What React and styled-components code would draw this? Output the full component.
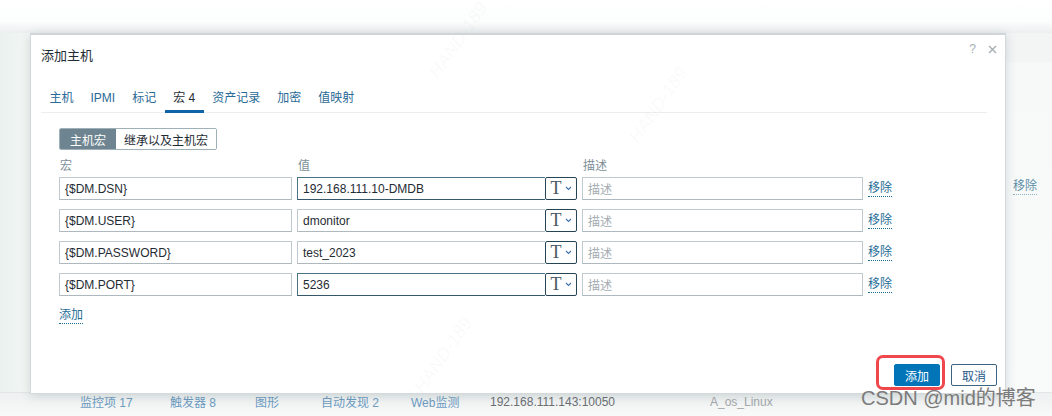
import React from "react";
import styled, { createGlobalStyle, css } from "styled-components";

const Global = createGlobalStyle`
  * { box-sizing: border-box; }
  body { margin: 0; font-family: "Liberation Sans", "Noto Sans CJK SC", sans-serif; font-size: 12px; color: #1f2c33; }
`;

const Page = styled.div`
  position: relative;
  width: 1052px;
  height: 416px;
  overflow: hidden;
  background: #ffffff;
`;

const Backdrop = styled.div`
  display: flex;
  flex-direction: column;
  height: 100%;
`;

const BackTop = styled.div`
  height: 33px;
  background: linear-gradient(#ffffff 0%, #fcfdfd 65%, #eceff0 100%);
`;

const BackMiddle = styled.div`
  flex: 1;
  display: flex;
`;

const LeftGutter = styled.div`
  width: 30px;
  background: linear-gradient(90deg, #eaf1ee, #f3f7f5);
  border-bottom: 1px solid #e2e6e6;
`;

const CenterFill = styled.div`
  flex: 1;
  background: #fafbfb;
`;

const RightGutter = styled.div`
  width: 46px;
  padding: 146px 0 0 7px;
  background: linear-gradient(#f3f5f5 0, #f3f5f5 28px, #f7f9f9 30px, #f9fbfb 100%);
  border-bottom: 1px solid #e2e6e6;
`;

const GhostLink = styled.span`
  display: inline-block;
  color: #5d8ea6;
  border-bottom: 1px dotted #8fb0c0;
  line-height: 15px;
  font-size: 12px;
`;

const BackBottom = styled.div`
  height: 23px;
  display: flex;
  align-items: center;
  padding: 0 0 6px 80px;
  background: linear-gradient(#eef1f1, #f8f9f9);
  font-size: 12px;
`;

const BackTab = styled.span`
  width: ${(p) => p.$w}px;
  flex: none;
  color: ${(p) => p.$color || "#6d9cc2"};
  white-space: nowrap;
`;

const Dialog = styled.div`
  position: absolute;
  left: 30px;
  top: 33px;
  width: 976px;
  height: 361px;
  background: #ffffff;
  border: 1px solid #d3d9dc;
  border-top: 2px solid #cfd5d8;
  box-shadow: 0 2px 10px rgba(40, 60, 60, 0.18);
  display: flex;
  flex-direction: column;
`;

const Header = styled.div`
  display: flex;
  justify-content: space-between;
  align-items: flex-start;
  height: 43px;
  padding: 11px 8px 0 10px;
`;

const Title = styled.h4`
  margin: 0;
  font-size: 13px;
  font-weight: normal;
  line-height: 20px;
  color: #1f2c33;
`;

const HeaderIcons = styled.div`
  display: flex;
  gap: 12px;
  align-items: center;
  margin-top: -4px;
  color: #a6aeb2;
  font-size: 12px;
`;

const Body = styled.div`
  flex: 1;
  padding: 0 18px 0 10px;
`;

const TabList = styled.ul`
  display: flex;
  margin: 0;
  padding: 0;
  list-style: none;
  border-bottom: 1px solid #ebeef0;
`;

const Tab = styled.li`
  padding: 12px 8.5px 4px;
  line-height: 16px;
  font-size: 12px;
  color: #2a6a96;
  border-bottom: 3px solid transparent;
  margin-bottom: -1px;
  white-space: nowrap;
  ${(p) =>
    p.$active &&
    css`
      color: #1f2c33;
      border-bottom-color: #0f64a8;
    `}
`;

const Panel = styled.div`
  padding: 15px 0 0 18px;
`;

const Segmented = styled.div`
  display: inline-flex;
  height: 22px;
  border: 1px solid #9fb0b8;
  border-radius: 2px;
  overflow: hidden;
`;

const Segment = styled.span`
  display: flex;
  align-items: center;
  padding: 0 ${(p) => (p.$active ? 10 : 8)}px;
  font-size: 12px;
  background: ${(p) => (p.$active ? "#6e8591" : "#ffffff")};
  color: ${(p) => (p.$active ? "#ffffff" : "#1f2c33")};
`;

const Grid = styled.div`
  display: grid;
  grid-template-columns: 233px 280px 281px auto;
  column-gap: 5px;
  row-gap: 9px;
  margin-top: 9px;
  align-items: center;
`;

const ColLabel = styled.div`
  font-size: 12px;
  line-height: 14px;
  color: #7d8e96;
  padding-left: 1px;
  margin-bottom: -5px;
`;

const TextInput = styled.div`
  height: 23px;
  display: flex;
  align-items: center;
  padding: 0 5px;
  border: 1px solid ${(p) => (p.$dark ? "#4c7485" : "#bfc9ce")};
  border-bottom-color: ${(p) => (p.$dark ? "#34586a" : "#aeb9bf")};
  background: #ffffff;
  font-size: 12px;
  color: ${(p) => (p.$placeholder ? "#a3abaf" : "#1f2c33")};
  white-space: nowrap;
  overflow: hidden;
`;

const ValueGroup = styled.div`
  display: flex;
  height: 23px;
`;

const ValueField = styled(TextInput)`
  flex: 1;
  border-right: none;
`;

const TypeButton = styled.div`
  width: 32px;
  height: 23px;
  flex: none;
  display: flex;
  align-items: center;
  justify-content: center;
  gap: 3px;
  border: 1px solid #254455;
  border-radius: 2px;
  background: #ffffff;
  font-family: "Liberation Serif", "DejaVu Serif", serif;
  font-size: 18px;
  color: #4a575e;
`;

const LinkText = styled.span`
  display: inline-block;
  justify-self: start;
  font-size: 12px;
  line-height: 15px;
  color: #1f6d96;
  border-bottom: 1px dotted #1f6d96;
`;

const AddRow = styled.div`
  margin-top: 12px;
`;

const Footer = styled.div`
  display: flex;
  justify-content: flex-end;
  gap: 11px;
  padding: 0 8px 7px 0;
`;

const ButtonWrap = styled.div`
  position: relative;
`;

const Highlight = styled.div`
  position: absolute;
  left: -18px;
  right: -5px;
  top: -9px;
  bottom: -4px;
  border: 3px solid #f0474c;
  border-radius: 7px;
  pointer-events: none;
`;

const Button = styled.button`
  height: 22px;
  padding: 0 10px;
  border-radius: 2px;
  font-family: inherit;
  font-size: 12px;
  cursor: pointer;
  ${(p) =>
    p.$primary
      ? css`
          background: #0275b8;
          border: 1px solid #0275b8;
          color: #ffffff;
        `
      : css`
          background: #ffffff;
          border: 1px solid #3a6480;
          color: #1f5a8a;
        `}
`;

const Watermark = styled.div`
  position: absolute;
  left: ${(p) => p.$x}px;
  top: ${(p) => p.$y}px;
  transform: rotate(-55deg);
  transform-origin: left top;
  font-size: 18px;
  font-style: italic;
  color: rgba(120, 120, 120, 0.05);
  white-space: nowrap;
  pointer-events: none;
`;

const Credit = styled.div`
  position: absolute;
  left: 861px;
  top: 386px;
  font-size: 20px;
  line-height: 24px;
  color: #7b7b7b;
  font-family: "Liberation Sans", "Noto Sans CJK SC", sans-serif;
  pointer-events: none;
`;

const Chevron = () => (
  <svg width="7" height="5" viewBox="0 0 7 5">
    <path d="M1 1 L3.5 3.5 L6 1" fill="none" stroke="#3d74b0" strokeWidth="1.1" />
  </svg>
);

const rows = [
  { macro: "{$DM.DSN}", value: "192.168.111.10-DMDB", dark: true },
  { macro: "{$DM.USER}", value: "dmonitor", dark: false },
  { macro: "{$DM.PASSWORD}", value: "test_2023", dark: false },
  { macro: "{$DM.PORT}", value: "5236", dark: true },
];

const tabs = ["主机", "IPMI", "标记", "宏 4", "资产记录", "加密", "值映射"];

export default function App() {
  return (
    <Page>
      <Global />
      <Backdrop>
        <BackTop />
        <BackMiddle>
          <LeftGutter />
          <CenterFill />
          <RightGutter>
            <GhostLink>移除</GhostLink>
          </RightGutter>
        </BackMiddle>
        <BackBottom>
          <BackTab $w={90}>监控项 17</BackTab>
          <BackTab $w={85}>触发器 8</BackTab>
          <BackTab $w={66}>图形</BackTab>
          <BackTab $w={90}>自动发现 2</BackTab>
          <BackTab $w={79}>Web监测</BackTab>
          <BackTab $w={220} $color="#6b7075">192.168.111.143:10050</BackTab>
          <BackTab $w={80} $color="#a3a8ab">A_os_Linux</BackTab>
        </BackBottom>
      </Backdrop>

      <Dialog>
        <Header>
          <Title>添加主机</Title>
          <HeaderIcons>
            <span>?</span>
            <svg width="9" height="9" viewBox="0 0 9 9">
              <path d="M1 1 L8 8 M8 1 L1 8" stroke="#a6aeb2" strokeWidth="1.4" />
            </svg>
          </HeaderIcons>
        </Header>
        <Body>
          <TabList>
            {tabs.map((t) => (
              <Tab key={t} $active={t === "宏 4"}>
                {t}
              </Tab>
            ))}
          </TabList>
          <Panel>
            <Segmented>
              <Segment $active>主机宏</Segment>
              <Segment>继承以及主机宏</Segment>
            </Segmented>
            <Grid>
              <ColLabel>宏</ColLabel>
              <ColLabel>值</ColLabel>
              <ColLabel>描述</ColLabel>
              <div />
              {rows.map((r) => (
                <React.Fragment key={r.macro}>
                  <TextInput>{r.macro}</TextInput>
                  <ValueGroup>
                    <ValueField $dark={r.dark}>{r.value}</ValueField>
                    <TypeButton>
                      T<Chevron />
                    </TypeButton>
                  </ValueGroup>
                  <TextInput $placeholder>描述</TextInput>
                  <LinkText>移除</LinkText>
                </React.Fragment>
              ))}
            </Grid>
            <AddRow>
              <LinkText>添加</LinkText>
            </AddRow>
          </Panel>
        </Body>
        <Footer>
          <ButtonWrap>
            <Button $primary>添加</Button>
            <Highlight />
          </ButtonWrap>
          <Button>取消</Button>
        </Footer>
      </Dialog>

      <Watermark $x={425} $y={70}>HAND-189</Watermark>
      <Watermark $x={625} $y={135}>HAND-189</Watermark>
      <Watermark $x={410} $y={385}>HAND-189</Watermark>
      <Credit>CSDN @mid的博客</Credit>
    </Page>
  );
}
